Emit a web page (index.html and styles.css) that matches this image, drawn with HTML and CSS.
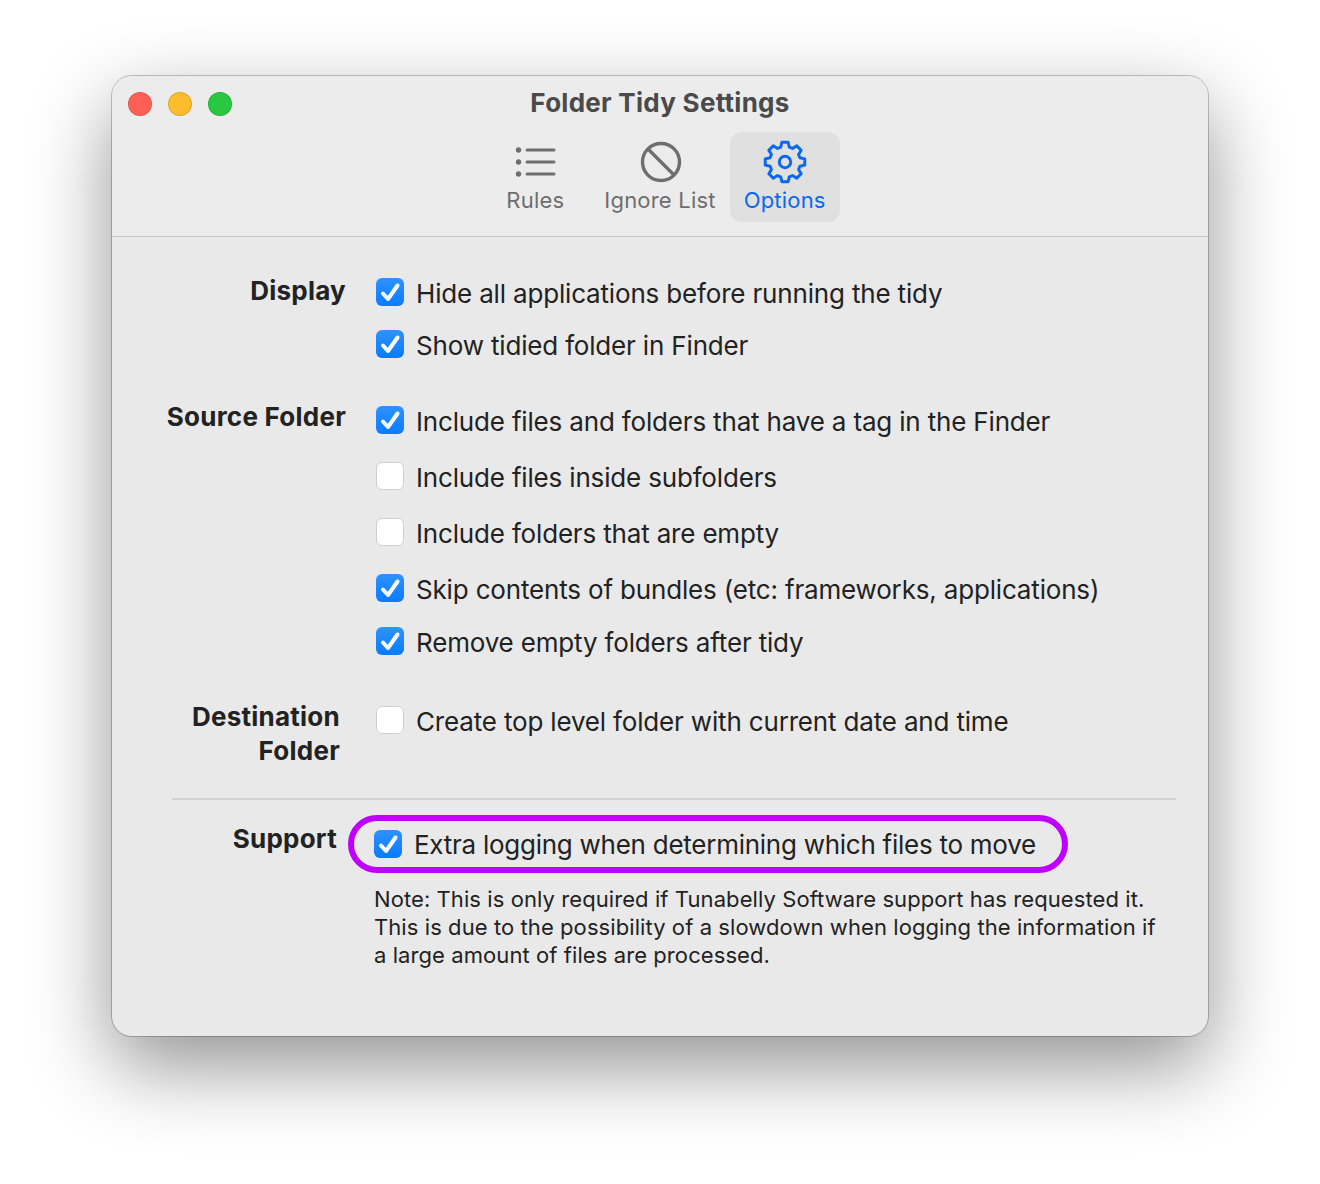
FILE: index.html
```html
<!DOCTYPE html>
<html lang="en">
<head>
  <meta charset="UTF-8" />
  <title>Folder Tidy Settings</title>
  <link rel="stylesheet" href="styles.css">
</head>
<body>
  <div class="window">
    <div class="header">
      <div class="titlebar">
        <div class="lights">
          <span class="light red"></span>
          <span class="light yellow"></span>
          <span class="light green"></span>
        </div>
        <div class="title">Folder Tidy Settings</div>
      </div>

      <div class="tabs">
        <div class="tab">
          <svg class="tab-icon" viewBox="-22 -22 44 44">
            <g fill="currentColor">
              <circle cx="-16.5" cy="-12" r="2.7"/>
              <circle cx="-16.5" cy="0" r="2.7"/>
              <circle cx="-16.5" cy="12" r="2.7"/>
            </g>
            <g stroke="currentColor" stroke-width="3" stroke-linecap="round">
              <path d="M-8 -12H19M-8 0H19M-8 12H19"/>
            </g>
          </svg>
          <span>Rules</span>
        </div>
        <div class="tab">
          <svg class="tab-icon" viewBox="-22 -22 44 44">
            <circle cx="1" cy="0" r="18.5" fill="none" stroke="currentColor" stroke-width="3.4"/>
            <path d="M-12 -13L14 13" stroke="currentColor" stroke-width="3.4"/>
          </svg>
          <span>Ignore List</span>
        </div>
        <div class="tab active">
          <svg class="tab-icon" viewBox="-22 -22 44 44">
            <path fill="none" stroke="currentColor" stroke-width="3" stroke-linejoin="round" d="M14.9 -4.27L19.75 -3.13L19.75 3.13L14.9 4.27L13.56 7.51L16.18 11.76L11.76 16.18L7.51 13.56L4.27 14.9L3.13 19.75L-3.13 19.75L-4.27 14.9L-7.51 13.56L-11.76 16.18L-16.18 11.76L-13.56 7.51L-14.9 4.27L-19.75 3.13L-19.75 -3.13L-14.9 -4.27L-13.56 -7.51L-16.18 -11.76L-11.76 -16.18L-7.51 -13.56L-4.27 -14.9L-3.13 -19.75L3.13 -19.75L4.27 -14.9L7.51 -13.56L11.76 -16.18L16.18 -11.76L13.56 -7.51Z"/>
            <circle cx="0" cy="0" r="5.7" fill="none" stroke="currentColor" stroke-width="3"/>
          </svg>
          <span>Options</span>
        </div>
      </div>
    </div>

    <div class="content">
      <!-- Display -->
      <div class="section display">
        <div class="section-label">Display</div>
        <div class="rows">
          <div class="row">
            <svg class="check on" viewBox="0 0 28 28"><path d="M7 15.5L12 21L21.5 7.5"/></svg>
            <span class="row-text">Hide all applications before running the tidy</span>
          </div>
          <div class="row">
            <svg class="check on" viewBox="0 0 28 28"><path d="M7 15.5L12 21L21.5 7.5"/></svg>
            <span class="row-text">Show tidied folder in Finder</span>
          </div>
        </div>
      </div>

      <!-- Source Folder -->
      <div class="section source">
        <div class="section-label">Source Folder</div>
        <div class="rows">
          <div class="row">
            <svg class="check on" viewBox="0 0 28 28"><path d="M7 15.5L12 21L21.5 7.5"/></svg>
            <span class="row-text">Include files and folders that have a tag in the Finder</span>
          </div>
          <div class="row">
            <span class="check off"></span>
            <span class="row-text">Include files inside subfolders</span>
          </div>
          <div class="row">
            <span class="check off"></span>
            <span class="row-text">Include folders that are empty</span>
          </div>
          <div class="row">
            <svg class="check on" viewBox="0 0 28 28"><path d="M7 15.5L12 21L21.5 7.5"/></svg>
            <span class="row-text">Skip contents of bundles (etc: frameworks, applications)</span>
          </div>
          <div class="row last">
            <svg class="check on" viewBox="0 0 28 28"><path d="M7 15.5L12 21L21.5 7.5"/></svg>
            <span class="row-text">Remove empty folders after tidy</span>
          </div>
        </div>
      </div>

      <!-- Destination Folder -->
      <div class="section destination">
        <div class="section-label">Destination<br>Folder</div>
        <div class="rows">
          <div class="row">
            <span class="check off"></span>
            <span class="row-text">Create top level folder with current date and time</span>
          </div>
        </div>
      </div>

      <div class="divider"></div>

      <!-- Support -->
      <div class="section support">
        <div class="section-label">Support</div>
        <div class="rows">
          <div class="row ring">
            <svg class="check on" viewBox="0 0 28 28"><path d="M7 15.5L12 21L21.5 7.5"/></svg>
            <span class="row-text">Extra logging when determining which files to move</span>
          </div>
          <p class="note">Note: This is only required if Tunabelly Software support has requested it.<br>This is due to the possibility of a slowdown when logging the information if<br>a large amount of files are processed.</p>
        </div>
      </div>
    </div>
  </div>
</body>
</html>
```

FILE: styles.css
```css
* {
  box-sizing: border-box;
}
body {
  margin: 0;
  height: 1184px;
  padding-top: 76px;
  background: #fff;
  font-family: "Inter", "Liberation Sans", sans-serif;
  color: #222;
  overflow: hidden;
}
.window {
  width: 1096px;
  height: 960px;
  margin: 0 auto;
  border-radius: 20px;
  background: #e9e9e9;
  box-shadow: 0 0 0 1px rgba(0, 0, 0, 0.22), 0 30px 80px rgba(0, 0, 0, 0.43);
  overflow: hidden;
}
.header {
  height: 161px;
  background: #ececec;
  border-bottom: 1px solid #c6c6c6;
}
.titlebar {
  position: relative;
  height: 56px;
  padding-top: 12px;
  text-align: center;
}
.title {
  font-size: 26px;
  font-weight: 700;
  letter-spacing: 0.27px;
  line-height: 30px;
  color: #4a4a4a;
}
.lights {
  position: absolute;
  left: 16px;
  top: 16px;
  display: flex;
  gap: 16px;
}
.light {
  width: 24px;
  height: 24px;
  border-radius: 50%;
  border: 1px solid rgba(0, 0, 0, 0.12);
}
.red {
  background: #ff5f57;
}
.yellow {
  background: #febc2e;
}
.green {
  background: #28c840;
}
.tabs {
  display: flex;
  justify-content: center;
}
.tab {
  min-width: 110px;
  height: 90px;
  padding: 8px 14px 0;
  border-radius: 12px;
  display: flex;
  flex-direction: column;
  align-items: center;
  color: #6e6e6e;
  font-size: 22px;
  letter-spacing: 0.2px;
  line-height: 28px;
}
.tab-icon {
  width: 44px;
  height: 44px;
  margin-bottom: 2px;
}
.tab.active {
  background: #e0e0e0;
  color: #0a68f0;
}
.content {
  padding-top: 41px;
}
.section {
  display: grid;
  grid-template-columns: 234px 1fr;
  column-gap: 30px;
}
.section-label {
  text-align: right;
  font-size: 26px;
  font-weight: 700;
  letter-spacing: 0.25px;
  line-height: 34px;
  margin-top: -4px;
}
.rows {
  display: flex;
  flex-direction: column;
}
.row {
  display: flex;
  align-items: center;
  gap: 12px;
  height: 28px;
  font-size: 26px;
  letter-spacing: -0.17px;
  white-space: nowrap;
}
.row-text {
  padding-top: 2px;
}
.display .row + .row {
  margin-top: 24px;
}
.source {
  margin-top: 48px;
}
.source .section-label {
  margin-top: -6px;
}
.source .row + .row {
  margin-top: 28px;
}
.source .row.last {
  margin-top: 25px;
}
.destination {
  margin-top: 51px;
}
.destination .section-label {
  padding-right: 6px;
  margin-top: -6px;
}
.check {
  flex: none;
  width: 28px;
  height: 28px;
  border-radius: 6px;
}
.check.on {
  background: linear-gradient(#2f92ff, #0a7aff);
}
.check.on path {
  fill: none;
  stroke: #fff;
  stroke-width: 4;
  stroke-linecap: round;
  stroke-linejoin: round;
}
.check.off {
  background: #fff;
  border: 1px solid #cfcfcf;
}
.divider {
  height: 2px;
  margin: 30px 32px 0 60px;
  background: #d3d3d3;
}
.support {
  margin-top: 15px;
  column-gap: 9px;
}
.support .section-label {
  padding-right: 9px;
  margin-top: 7px;
}
.ring {
  width: 720px;
  height: 58px;
  margin-left: -7px;
  padding-left: 20px;
  border: 6px solid #bf00ff;
  border-radius: 29px;
  letter-spacing: -0.26px;
}
.ring .row-text {
  padding-top: 0;
}
.note {
  margin: 12px 0 0 19px;
  font-size: 22px;
  letter-spacing: 0.08px;
  line-height: 28px;
  white-space: nowrap;
}
```
